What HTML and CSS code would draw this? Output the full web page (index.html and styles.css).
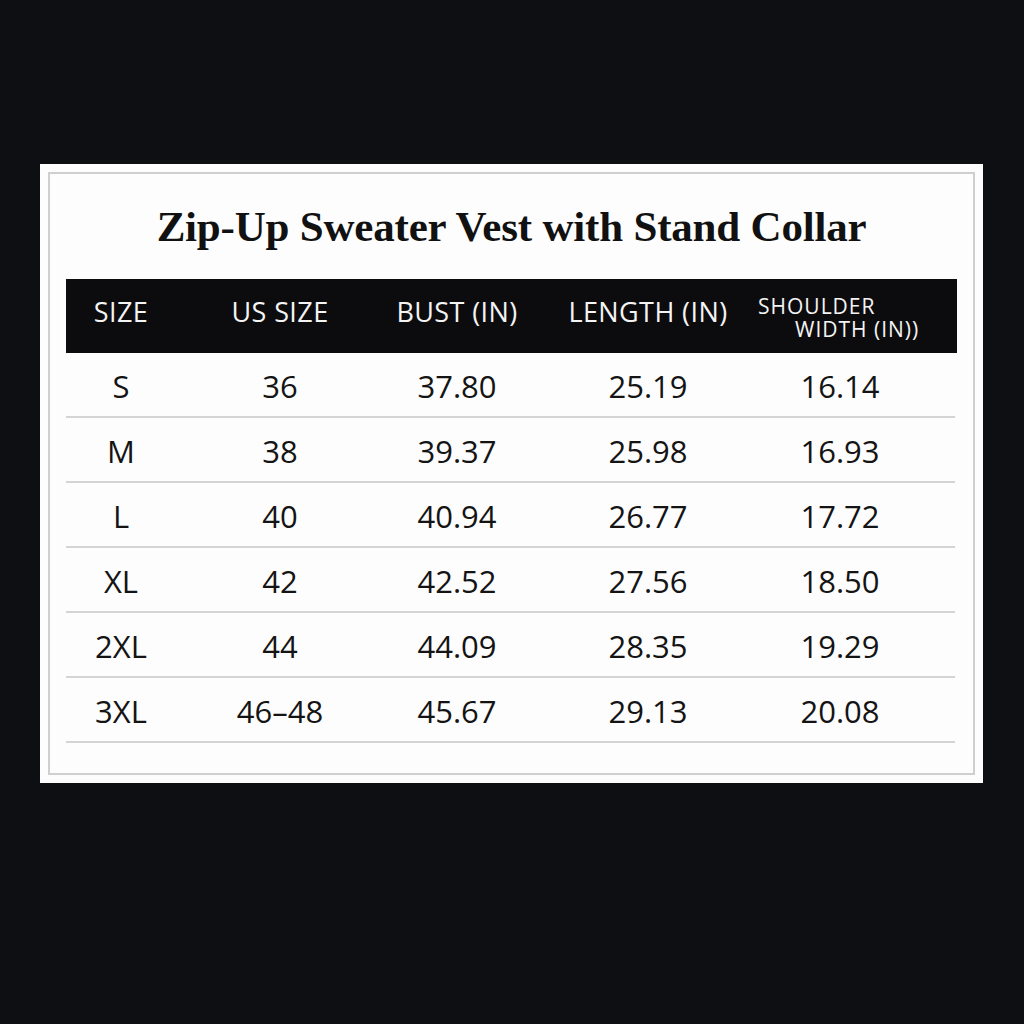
FILE: index.html
```html
<!DOCTYPE html>
<html>
<head>
<meta charset="utf-8">
<link rel="stylesheet" href="styles.css">
</head>
<body>
<div class="card">
  <div class="inner">
    <h1 class="title">Zip-Up Sweater Vest with Stand Collar</h1>
    <div class="table">
      <div class="row head">
        <div class="cell">SIZE</div>
        <div class="cell">US SIZE</div>
        <div class="cell">BUST (IN)</div>
        <div class="cell">LENGTH (IN)</div>
        <div class="cell shoulder"><span class="l1">SHOULDER</span><span class="l2">WIDTH (IN))</span></div>
      </div>
      <div class="row"><div class="cell">S</div><div class="cell">36</div><div class="cell">37.80</div><div class="cell">25.19</div><div class="cell">16.14</div></div>
      <div class="row"><div class="cell">M</div><div class="cell">38</div><div class="cell">39.37</div><div class="cell">25.98</div><div class="cell">16.93</div></div>
      <div class="row"><div class="cell">L</div><div class="cell">40</div><div class="cell">40.94</div><div class="cell">26.77</div><div class="cell">17.72</div></div>
      <div class="row"><div class="cell">XL</div><div class="cell">42</div><div class="cell">42.52</div><div class="cell">27.56</div><div class="cell">18.50</div></div>
      <div class="row"><div class="cell">2XL</div><div class="cell">44</div><div class="cell">44.09</div><div class="cell">28.35</div><div class="cell">19.29</div></div>
      <div class="row"><div class="cell">3XL</div><div class="cell">46–48</div><div class="cell">45.67</div><div class="cell">29.13</div><div class="cell">20.08</div></div>
    </div>
  </div>
</div>
</body>
</html>
```
FILE: styles.css
```css
html, body {
  margin: 0;
  padding: 0;
  background: #0e0f13;
  height: 1024px;
}
.card {
  margin: 164px 0 0 40px;
  width: 943px;
  height: 619px;
  box-sizing: border-box;
  background: #fdfdfd;
  padding: 8px;
}
.inner {
  height: 100%;
  box-sizing: border-box;
  border: 2px solid #cfcfcf;
  padding: 0 16px;
}
.title {
  margin: 0;
  padding-top: 28px;
  height: 77px;
  box-sizing: border-box;
  line-height: 50px;
  text-align: center;
  font-family: "Liberation Serif", "DejaVu Serif", serif;
  font-weight: bold;
  font-size: 43px;
  color: #111;
  letter-spacing: -0.2px;
}
.table {
  margin-top: 28px;
}
.row {
  display: grid;
  grid-template-columns: 110px 208px 146px 236px 148px 1fr;
  height: 65px;
  box-sizing: border-box;
  border-bottom: 2px solid #d4d4d4;
  align-items: center;
  font-family: "Open Sans", "Noto Sans", sans-serif;
  font-size: 31px;
  color: #141414;
  margin-right: 2px;
}
.row .cell {
  text-align: center;
  white-space: nowrap;
  display: flex;
  justify-content: center;
  padding-top: 2px;
}
.row.head {
  height: 74px;
  background: #0c0c0e;
  color: #f4f4f4;
  border-bottom: none;
  font-size: 27px;
  letter-spacing: 0.4px;
  margin-right: 0;
}
.row.head .cell {
  padding-top: 0;
  margin-top: -10px;
}
.row.head .shoulder {
  display: flex;
  flex-direction: column;
  align-items: flex-start;
  font-size: 21px;
  line-height: 23px;
  letter-spacing: 1px;
  margin-left: -8px;
  margin-top: 4px;
}
.shoulder .l1, .shoulder .l2 {
  display: block;
  height: 23px;
}
.shoulder .l2 {
  padding-left: 37px;
}
```
